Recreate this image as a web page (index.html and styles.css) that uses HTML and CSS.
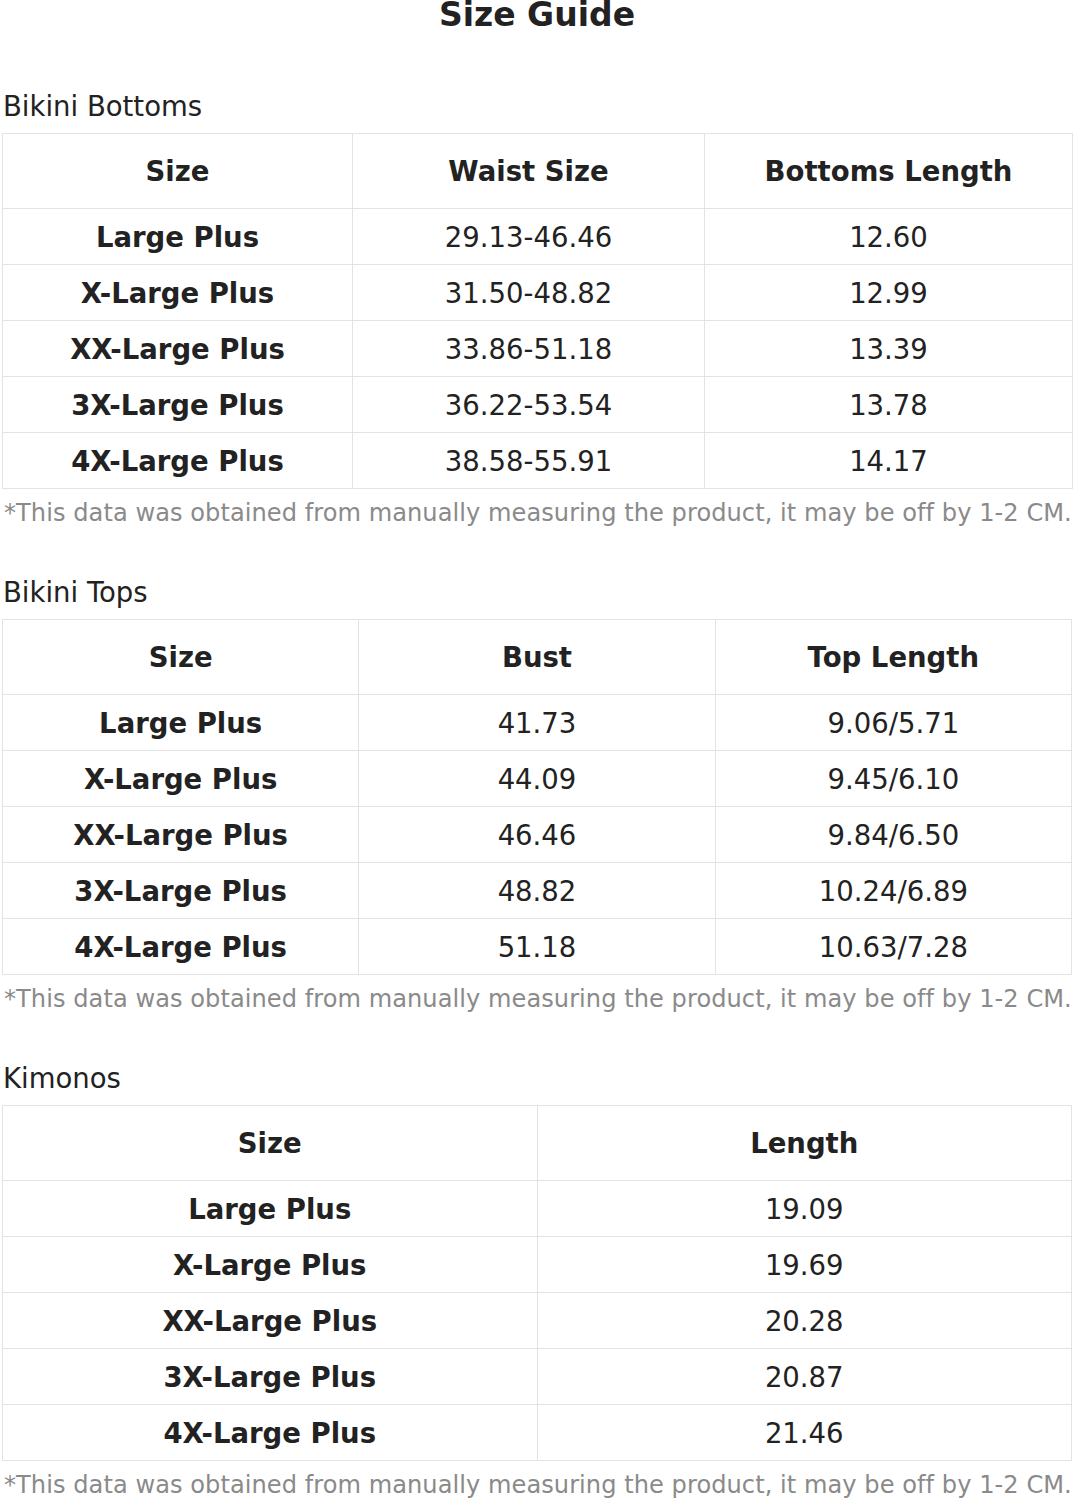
FILE: index.html
```html
<!DOCTYPE html>
<html>
<head>
<meta charset="utf-8">
<link rel="stylesheet" href="styles.css">
</head>
<body>
<div class="page">
  <h1 class="title">Size Guide</h1>

  <section class="section">
    <h2 class="section-title">Bikini Bottoms</h2>
    <table class="size-table">
      <colgroup><col class="c-b1"><col class="c-b2"><col class="c-b3"></colgroup>
      <thead><tr><th>Size</th><th>Waist Size</th><th>Bottoms Length</th></tr></thead>
      <tbody>
        <tr><th>Large Plus</th><td>29.13-46.46</td><td>12.60</td></tr>
        <tr><th>X-Large Plus</th><td>31.50-48.82</td><td>12.99</td></tr>
        <tr><th>XX-Large Plus</th><td>33.86-51.18</td><td>13.39</td></tr>
        <tr><th>3X-Large Plus</th><td>36.22-53.54</td><td>13.78</td></tr>
        <tr><th>4X-Large Plus</th><td>38.58-55.91</td><td>14.17</td></tr>
      </tbody>
    </table>
    <p class="note">*This data was obtained from manually measuring the product, it may be off by 1-2 CM.</p>
  </section>

  <section class="section">
    <h2 class="section-title">Bikini Tops</h2>
    <table class="size-table">
      <colgroup><col class="c-t"><col class="c-t"><col class="c-t"></colgroup>
      <thead><tr><th>Size</th><th>Bust</th><th>Top Length</th></tr></thead>
      <tbody>
        <tr><th>Large Plus</th><td>41.73</td><td>9.06/5.71</td></tr>
        <tr><th>X-Large Plus</th><td>44.09</td><td>9.45/6.10</td></tr>
        <tr><th>XX-Large Plus</th><td>46.46</td><td>9.84/6.50</td></tr>
        <tr><th>3X-Large Plus</th><td>48.82</td><td>10.24/6.89</td></tr>
        <tr><th>4X-Large Plus</th><td>51.18</td><td>10.63/7.28</td></tr>
      </tbody>
    </table>
    <p class="note">*This data was obtained from manually measuring the product, it may be off by 1-2 CM.</p>
  </section>

  <section class="section">
    <h2 class="section-title">Kimonos</h2>
    <table class="size-table">
      <colgroup><col class="c-k"><col class="c-k"></colgroup>
      <thead><tr><th>Size</th><th>Length</th></tr></thead>
      <tbody>
        <tr><th>Large Plus</th><td>19.09</td></tr>
        <tr><th>X-Large Plus</th><td>19.69</td></tr>
        <tr><th>XX-Large Plus</th><td>20.28</td></tr>
        <tr><th>3X-Large Plus</th><td>20.87</td></tr>
        <tr><th>4X-Large Plus</th><td>21.46</td></tr>
      </tbody>
    </table>
    <p class="note">*This data was obtained from manually measuring the product, it may be off by 1-2 CM.</p>
  </section>
</div>
</body>
</html>
```

FILE: styles.css
```css
html, body {
  margin: 0;
  padding: 0;
  background: #ffffff;
}

body {
  font-family: "DejaVu Sans", Verdana, sans-serif;
  color: #222222;
}

.page {
  padding: 0 2px;
}

.title {
  margin: -2px 0 0;
  font-size: 33px;
  line-height: 33px;
  font-weight: bold;
  text-align: center;
  color: #222222;
}

.section {
  display: flex;
  flex-direction: column;
}

.section-title {
  margin: 46.5px 0 11.5px 1px;
  font-size: 27.5px;
  line-height: 32px;
  font-weight: normal;
  color: #222222;
}

.title + .section .section-title {
  margin-top: 58.5px;
}

.size-table {
  width: 1070px;
  border-collapse: collapse;
  table-layout: fixed;
  font-size: 27.5px;
}

.size-table th,
.size-table td {
  border: 1px solid #e3e3e3;
  text-align: center;
  vertical-align: middle;
  padding: 0;
  color: #222222;
}

.size-table thead th {
  height: 74px;
  font-weight: bold;
}

.size-table tbody th,
.size-table tbody td {
  height: 55px;
}

.size-table tbody th {
  font-weight: bold;
}

.size-table tbody td {
  font-weight: normal;
}

.c-b1 { width: 350px; }
.c-b2 { width: 352px; }
.c-b3 { width: 368px; }
.c-t { width: 33.333%; }
.c-k { width: 50%; }

.note {
  margin: 8px 0 0 2px;
  font-size: 24.1px;
  line-height: 32px;
  letter-spacing: 0.05px;
  color: #8a8a8a;
  white-space: nowrap;
}
```
